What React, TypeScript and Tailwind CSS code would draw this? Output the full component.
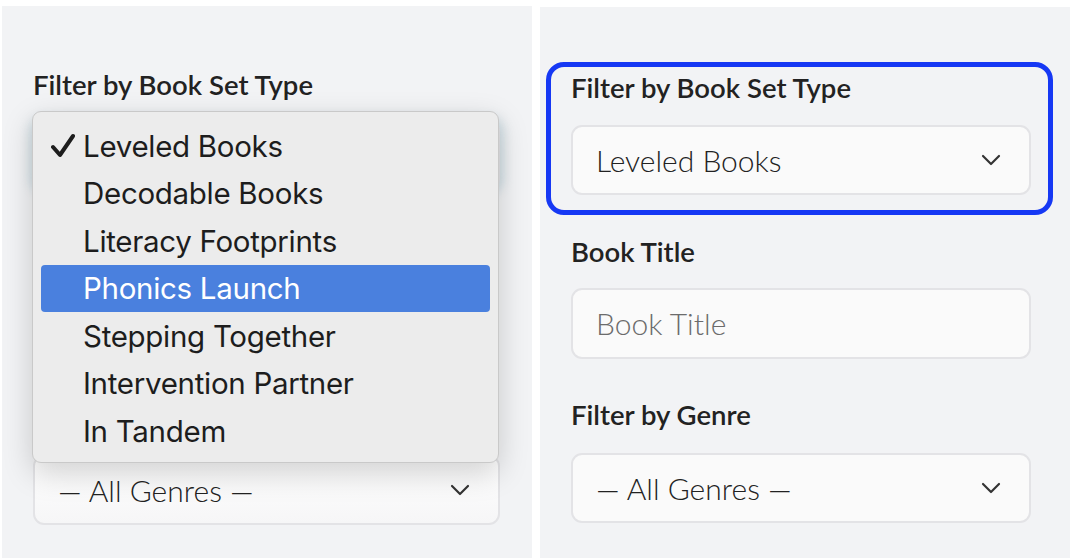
import { ChevronDown } from "lucide-react";

const lato = { fontFamily: "Lato, 'Noto Sans', sans-serif" };

const options = [
  "Leveled Books",
  "Decodable Books",
  "Literacy Footprints",
  "Phonics Launch",
  "Stepping Together",
  "Intervention Partner",
  "In Tandem",
];

function Label({ children }: { children: React.ReactNode }) {
  return (
    <div className="h-[30px] leading-[30px] text-[27.5px] font-semibold text-[#222]">
      {children}
    </div>
  );
}

function SelectBox({ value, className = "" }: { value?: string; className?: string }) {
  return (
    <div
      className={`flex items-center justify-between h-[70px] w-[460px] rounded-[11px] border-2 border-[#e3e3e6] bg-[#fafafa] pl-[23px] pr-[22px] ${className}`}
    >
      <span className="text-[30px] font-light text-[#222]">{value}</span>
      <ChevronDown size={32} strokeWidth={1.6} className="text-[#333]" />
    </div>
  );
}

function CheckMark() {
  return (
    <svg width="24" height="26" viewBox="0 0 24 26" className="absolute left-[10px] top-[11px]">
      <path d="M2 14 L9 22 L22 3" fill="none" stroke="#1d1d1d" strokeWidth="4" strokeLinecap="round" strokeLinejoin="round" />
    </svg>
  );
}

function OpenMenu() {
  return (
    <div
      className="absolute left-[30px] top-[105px] w-[467px] rounded-[9px] border border-[#c9c9c9] bg-[#ececec] pt-[10px] pb-[7px] shadow-[0_10px_30px_rgba(0,0,0,0.18)]"
      style={{ fontFamily: "Inter, 'Liberation Sans', sans-serif" }}
    >
      {options.map((o, i) => (
        <div
          key={o}
          className={`relative mx-[8px] h-[47.5px] rounded-[4px] pl-[42px] flex items-center text-[29.5px] tracking-[-0.3px] ${
            i === 3 ? "bg-[#4a80de] text-white" : "text-[#1d1d1d]"
          }`}
        >
          {i === 0 && <CheckMark />}
          {o}
        </div>
      ))}
    </div>
  );
}

export default function App() {
  return (
    <div className="w-[1070px] h-[558px] bg-white flex overflow-hidden" style={lato}>
      {/* left: native select open */}
      <div className="relative mt-[6px] ml-[2px] w-[530px] h-[552px] bg-[#f2f3f5] pl-[31px] pt-[64px]">
        <Label>Filter by Book Set Type</Label>
        <SelectBox className="mt-[20px] w-[467px] shadow-[0_0_10px_4px_rgba(170,200,210,0.45)]" />
        <div className="h-[265px]" />
        <SelectBox
          value="— All Genres —"
          className="w-[467px] h-[69px] bg-gradient-to-b from-white to-[#f6f6f7]"
        />
        <OpenMenu />
      </div>

      {/* right: focused select */}
      <div className="mt-[7px] ml-[8px] flex-1 h-[551px] bg-[#f2f3f5] pl-[6px] pt-[55px]">
        <div className="w-[507px] rounded-[18px] border-[5px] border-[#1638f4] pl-[20px] pt-[6px] pb-[15px]">
          <Label>Filter by Book Set Type</Label>
          <SelectBox value="Leveled Books" className="mt-[22px]" />
        </div>
        <div className="pl-[25px]">
          <div className="mt-[22px]">
            <Label>Book Title</Label>
          </div>
          <div className="mt-[21px] flex items-center h-[71px] w-[460px] rounded-[11px] border-2 border-[#e3e3e6] bg-[#fafafa] pl-[23px]">
            <span className="text-[30px] font-light text-[#6b6b6b]">Book Title</span>
          </div>
          <div className="mt-[41px]">
            <Label>Filter by Genre</Label>
          </div>
          <SelectBox value="— All Genres —" className="mt-[23px]" />
        </div>
      </div>
    </div>
  );
}
